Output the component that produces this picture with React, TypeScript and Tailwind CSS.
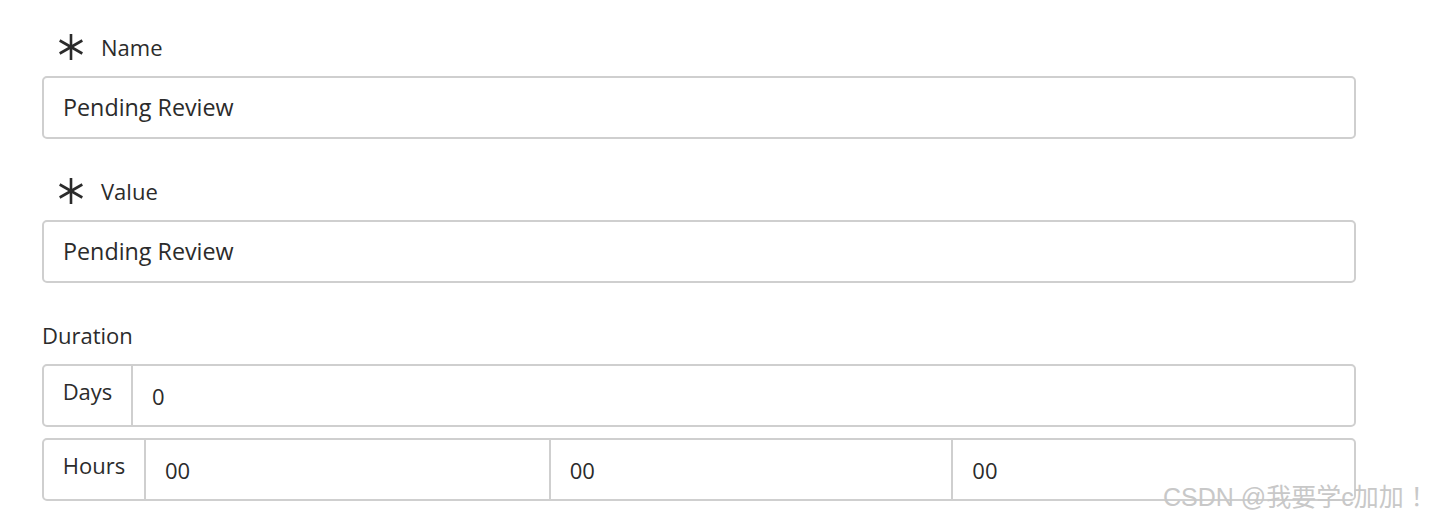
import React from "react";

const font = { fontFamily: "'Open Sans', 'Noto Sans CJK SC', sans-serif" };

function Asterisk() {
  return (
    <svg width="28" height="28" viewBox="0 0 28 28" className="shrink-0">
      <g stroke="#2b2b2b" strokeWidth="2.6" strokeLinecap="butt">
        <line x1="14" y1="1" x2="14" y2="27" />
        <line x1="2.7" y1="7.5" x2="25.3" y2="20.5" />
        <line x1="2.7" y1="20.5" x2="25.3" y2="7.5" />
      </g>
    </svg>
  );
}

function FieldLabel({ text, required }: { text: string; required?: boolean }) {
  return (
    <div className={`flex items-center h-[30px] mb-[14px] text-[22px] text-[#2b2b2b] ${required ? "pl-[15px] gap-[16px]" : ""}`}>
      {required && <Asterisk />}
      <span className="pt-[1px]">{text}</span>
    </div>
  );
}

function TextInput({ value }: { value: string }) {
  return (
    <div className="h-[63px] border-2 border-[#cfcfcf] rounded-[5px] flex items-center px-[19px] text-[23.3px] text-[#2b2b2b] bg-white">
      {value}
    </div>
  );
}

export default function App() {
  return (
    <div className="relative w-[1446px] h-[524px] bg-white overflow-hidden" style={font}>
      <div className="pl-[42px] pt-[32px] w-[1356px]">
        <FieldLabel text="Name" required />
        <TextInput value="Pending Review" />

        <div className="h-[37px]" />
        <FieldLabel text="Value" required />
        <TextInput value="Pending Review" />

        <div className="h-[37px]" />
        <FieldLabel text="Duration" />

        {/* Days */}
        <div className="h-[63px] border-2 border-[#cfcfcf] rounded-[5px] flex text-[22px] text-[#2b2b2b]">
          <div className="w-[89px] border-r-2 border-[#cfcfcf] flex items-start justify-center pt-[9px]">Days</div>
          <div className="flex-1 flex items-center pl-[19px] pt-[2px]">0</div>
        </div>

        {/* Hours */}
        <div className="mt-[11px] h-[63px] border-2 border-[#cfcfcf] rounded-[5px] flex text-[22px] text-[#2b2b2b]">
          <div className="w-[102px] border-r-2 border-[#cfcfcf] flex items-start justify-center pt-[9px]">Hours</div>
          <div className="flex-1 grid grid-cols-3">
            <div className="flex items-center pl-[19px] pt-[2px]">00</div>
            <div className="flex items-center pl-[19px] pt-[2px] border-l-2 border-[#cfcfcf]">00</div>
            <div className="flex items-center pl-[19px] pt-[2px] border-l-2 border-[#cfcfcf]">00</div>
          </div>
        </div>
      </div>

      <div className="absolute left-[1163px] top-[481px] text-[25px] leading-[32px] text-[#c8c8c8] whitespace-nowrap" style={{ fontFamily: "'Liberation Sans', 'Noto Sans CJK SC', sans-serif" }}>
        CSDN @我要学c加加 ！
      </div>
    </div>
  );
}
